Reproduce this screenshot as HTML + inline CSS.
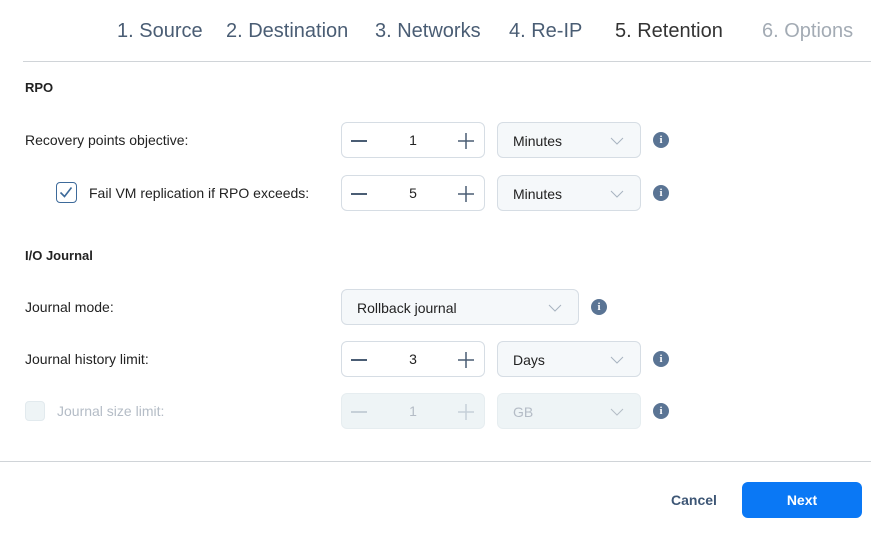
<!DOCTYPE html><html><head><style>
*{margin:0;padding:0;box-sizing:border-box}
body{width:871px;height:534px;background:#fff;font-family:"Liberation Sans",sans-serif;position:relative;overflow:hidden;color:#222}
.a{position:absolute;white-space:nowrap}
.st{font-size:20px;top:20px;color:#4a5d74}
.lbl{font-size:14px;color:#222}
.box{position:absolute;height:36px;border:1px solid #d6dde4;border-radius:6px;background:#fff}
.dd{background:#f5f8fa}
.dis{background:#eef4f6;border-color:#e6edf0}
.num{position:absolute;left:0;right:0;top:9px;text-align:center;font-size:14px}
.info{position:absolute;width:16px;height:16px;border-radius:50%;background:#5a7494;color:#fff;font:bold 11px/16px "Liberation Serif",serif;text-align:center}
</style></head><body>
<div class="a st" style="left:117px">1. Source</div>
<div class="a st" style="left:226px">2. Destination</div>
<div class="a st" style="left:375px">3. Networks</div>
<div class="a st" style="left:509px">4. Re-IP</div>
<div class="a st" style="left:615px;color:#333">5. Retention</div>
<div class="a st" style="left:762px;color:#a3abb4">6. Options</div>
<div class="a" style="left:23px;right:0;top:61px;height:1px;background:#d0d4d8"></div>
<div class="a" style="left:0;right:0;top:461px;height:1px;background:#d0d4d8"></div>
<div class="a" style="left:25px;top:80px;font-size:13px;font-weight:bold">RPO</div>
<div class="a" style="left:25px;top:248px;font-size:13px;font-weight:bold">I/O Journal</div>

<div class="a lbl" style="left:25px;top:132px">Recovery points objective:</div>
<div class="a" style="left:56px;top:182px;width:21px;height:21px;border:1.5px solid #3d6a9a;border-radius:4px"><svg width="18" height="18" viewBox="0 0 18 18" style="position:absolute;left:0;top:0"><path d="M3.5 9.5 L7.5 13.5 L14.5 4.5" stroke="#3d6a9a" stroke-width="1.6" fill="none"/></svg></div>
<div class="a lbl" style="left:89px;top:185px">Fail VM replication if RPO exceeds:</div>
<div class="a lbl" style="left:25px;top:299px">Journal mode:</div>
<div class="a lbl" style="left:25px;top:351px">Journal history limit:</div>
<div class="a" style="left:25px;top:401px;width:20px;height:20px;border:1px solid #e2eaee;border-radius:4px;background:#eef4f6"></div>
<div class="a lbl" style="left:57px;top:403px;color:#b4bcc6">Journal size limit:</div>

<div class="box" style="left:341px;top:122px;width:144px"><span class="a" style="left:9px;top:17px;width:16px;height:2px;background:#4a5d74"></span><div class="num">1</div><svg class="a" style="left:115px;top:9px" width="18" height="18"><path d="M9 1V17M1 9H17" stroke="#4a5d74" stroke-width="1.5"/></svg></div>
<div class="box" style="left:341px;top:175px;width:144px"><span class="a" style="left:9px;top:17px;width:16px;height:2px;background:#4a5d74"></span><div class="num">5</div><svg class="a" style="left:115px;top:9px" width="18" height="18"><path d="M9 1V17M1 9H17" stroke="#4a5d74" stroke-width="1.5"/></svg></div>
<div class="box" style="left:341px;top:341px;width:144px"><span class="a" style="left:9px;top:17px;width:16px;height:2px;background:#4a5d74"></span><div class="num">3</div><svg class="a" style="left:115px;top:9px" width="18" height="18"><path d="M9 1V17M1 9H17" stroke="#4a5d74" stroke-width="1.5"/></svg></div>
<div class="box dis" style="left:341px;top:393px;width:144px"><span class="a" style="left:9px;top:17px;width:16px;height:2px;background:#c6d0d8"></span><div class="num" style="color:#b4bcc6">1</div><svg class="a" style="left:115px;top:9px" width="18" height="18"><path d="M9 1V17M1 9H17" stroke="#c6d0d8" stroke-width="1.5"/></svg></div>

<div class="box dd" style="left:497px;top:122px;width:144px"><span class="a lbl" style="left:15px;top:10px">Minutes</span><svg class="a" style="left:112px;top:14px" width="14" height="8"><path d="M1 1L7 7L13 1" stroke="#a8b4c0" fill="none"/></svg></div>
<div class="box dd" style="left:497px;top:175px;width:144px"><span class="a lbl" style="left:15px;top:10px">Minutes</span><svg class="a" style="left:112px;top:14px" width="14" height="8"><path d="M1 1L7 7L13 1" stroke="#a8b4c0" fill="none"/></svg></div>
<div class="box dd" style="left:341px;top:289px;width:238px"><span class="a lbl" style="left:15px;top:10px">Rollback journal</span><svg class="a" style="left:206px;top:14px" width="14" height="8"><path d="M1 1L7 7L13 1" stroke="#a8b4c0" fill="none"/></svg></div>
<div class="box dd" style="left:497px;top:341px;width:144px"><span class="a lbl" style="left:15px;top:10px">Days</span><svg class="a" style="left:112px;top:14px" width="14" height="8"><path d="M1 1L7 7L13 1" stroke="#a8b4c0" fill="none"/></svg></div>
<div class="box dis" style="left:497px;top:393px;width:144px"><span class="a lbl" style="left:15px;top:10px;color:#b4bcc6">GB</span><svg class="a" style="left:112px;top:14px" width="14" height="8"><path d="M1 1L7 7L13 1" stroke="#b4bcc6" fill="none"/></svg></div>

<div class="info a" style="left:653px;top:132px">i</div>
<div class="info a" style="left:653px;top:185px">i</div>
<div class="info a" style="left:591px;top:299px">i</div>
<div class="info a" style="left:653px;top:351px">i</div>
<div class="info a" style="left:653px;top:403px">i</div>

<div class="a" style="left:671px;top:492px;font-size:14px;font-weight:bold;color:#3d5675">Cancel</div>
<div class="a" style="left:742px;top:482px;width:120px;height:36px;border-radius:6px;background:#0a78f5;color:#fff;font-size:14px;font-weight:bold;text-align:center;line-height:36px">Next</div>
</body></html>
